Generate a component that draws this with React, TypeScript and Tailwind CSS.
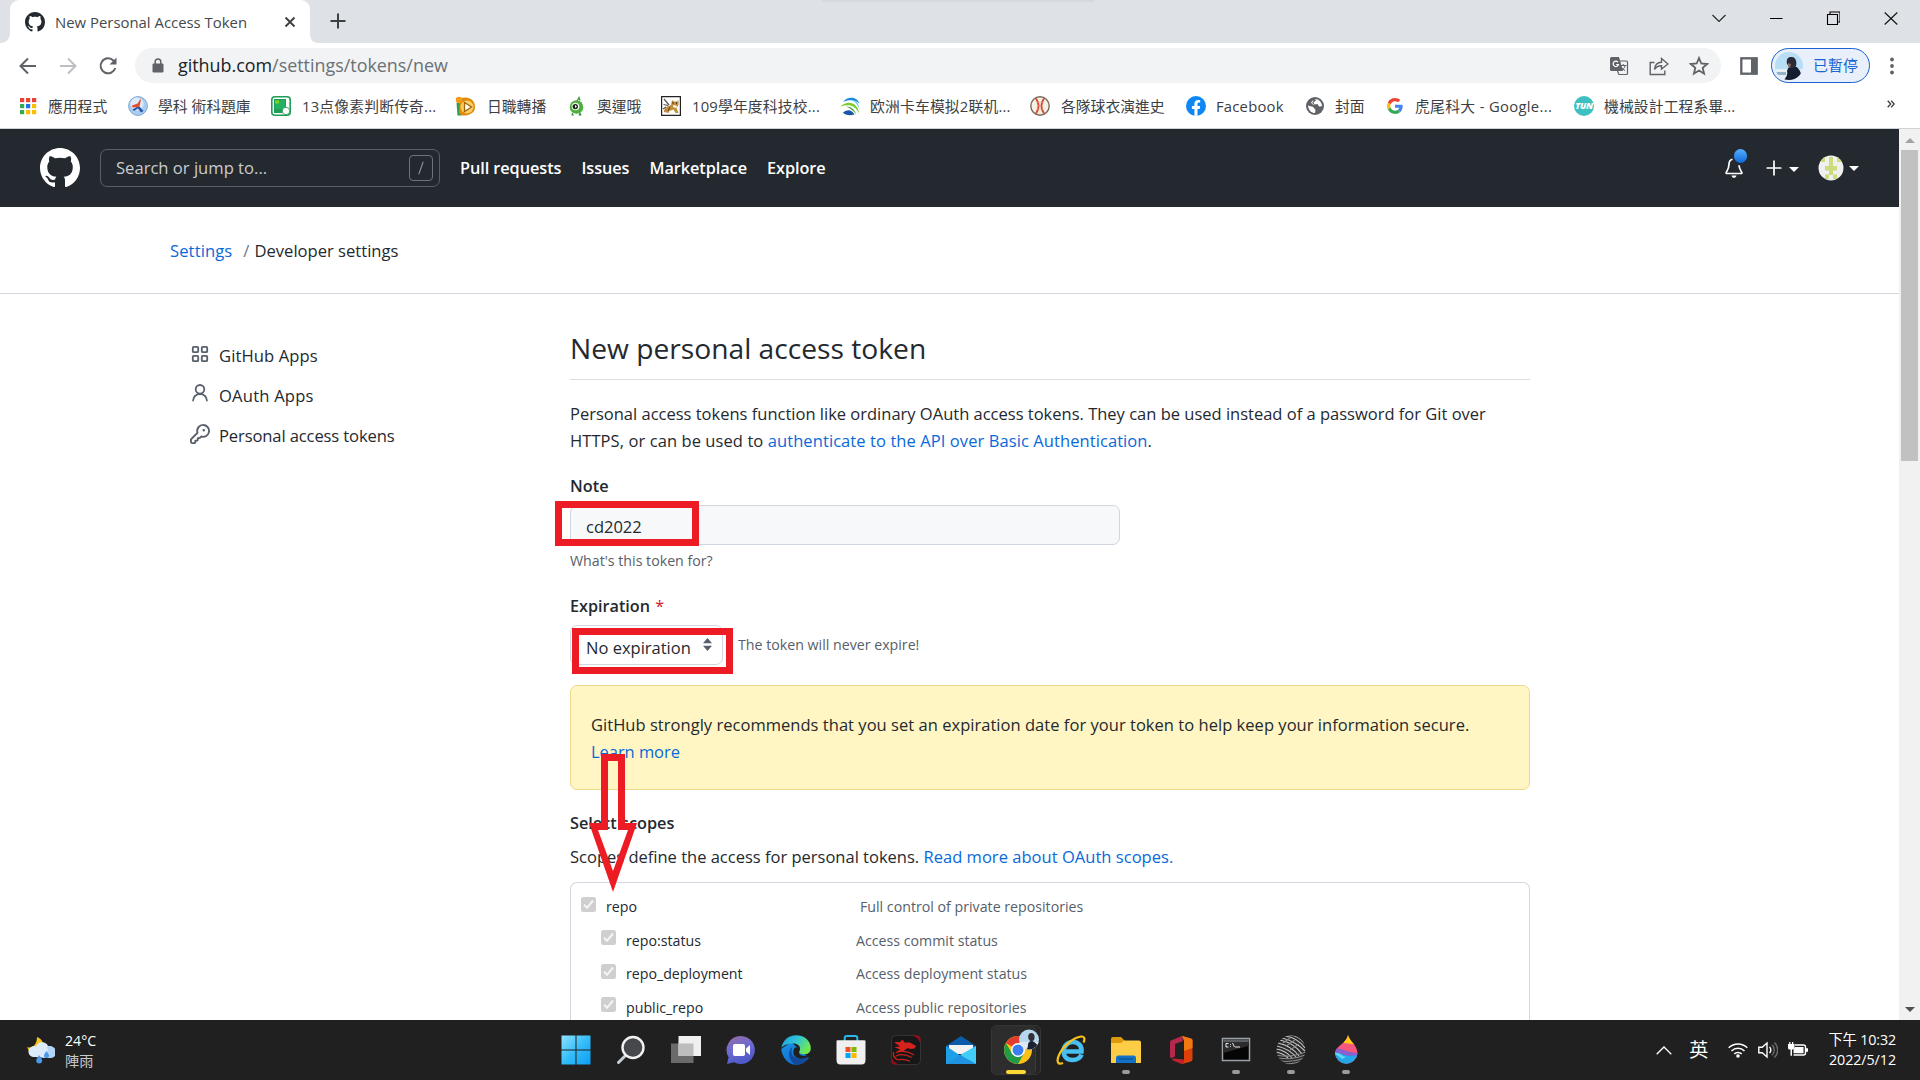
import type { ReactNode } from 'react';

const MARK =
  'M8 0C3.58 0 0 3.58 0 8c0 3.54 2.29 6.53 5.47 7.59.4.07.55-.17.55-.38 0-.19-.01-.82-.01-1.49-2.01.37-2.53-.49-2.69-.94-.09-.23-.48-.94-.82-1.13-.28-.15-.68-.52-.01-.53.63-.01 1.08.58 1.23.82.72 1.21 1.87.87 2.33.66.07-.52.28-.87.51-1.07-1.78-.2-3.64-.89-3.64-3.95 0-.87.31-1.59.82-2.15-.08-.2-.36-1.02.08-2.12 0 0 .67-.21 2.2.82.64-.18 1.32-.27 2-.27.68 0 1.36.09 2 .27 1.53-1.04 2.2-.82 2.2-.82.44 1.1.16 1.92.08 2.12.51.56.82 1.27.82 2.15 0 3.07-1.87 3.75-3.65 3.95.29.25.54.73.54 1.48 0 1.07-.01 1.93-.01 2.2 0 .21.15.46.55.38A8.013 8.013 0 0016 8c0-4.42-3.58-8-8-8z';

function GithubMark({ className }: { className: string }) {
  return (
    <svg viewBox="0 0 16 16" className={className} fill="currentColor">
      <path d={MARK} />
    </svg>
  );
}

/* ---------- Browser chrome ---------- */

function TabStrip() {
  return (
    <div className="relative flex h-[43px] shrink-0 bg-[#dee1e6]">
      <div className="absolute left-[822px] top-0 h-[2px] w-[273px] rounded-b bg-[#d5d8dd]" />
      <div className="flex w-[10px] items-end bg-white">
        <div className="h-full w-[10px] rounded-br-[9px] bg-[#dee1e6]" />
      </div>
      <div className="h-full bg-[#dee1e6]">
        <div className="flex h-full w-[300px] items-center rounded-t-[9px] bg-white pl-[15px] pr-[13px]">
          <GithubMark className="size-5 shrink-0 text-[#24292f]" />
          <span className="ml-[10px] mt-[2px] w-[220px] shrink-0 whitespace-nowrap text-[14.900px] text-[#45494d]">
            New Personal Access Token
          </span>
          <svg viewBox="0 0 12 12" className="ml-[9px] size-3 shrink-0" stroke="#3c4043" strokeWidth="1.900">
            <path d="M1.500 1.500l9 9M10.500 1.500l-9 9" />
          </svg>
        </div>
      </div>
      <div className="flex w-2 bg-white">
        <div className="h-full w-2 rounded-bl-[9px] bg-[#dee1e6]" />
      </div>
      <svg viewBox="0 0 16 16" className="ml-[12px] mt-[13px] size-4" stroke="#3c4043" strokeWidth="2">
        <path d="M8 .5v15M.5 8h15" />
      </svg>
      <div className="ml-auto flex items-start pt-[10px]">
        <svg viewBox="0 0 14 16" className="mr-[43px] h-4 w-[14px]" fill="none" stroke="#222" strokeWidth="1.100">
          <path d="M.5 5l6.500 6.500L13.500 5" />
        </svg>
        <svg viewBox="0 0 14 16" className="mr-[43px] h-4 w-[14px]" stroke="#000" strokeWidth="1">
          <path d="M1 8.500h12.500" />
        </svg>
        <svg viewBox="0 0 14 16" className="mr-[44px] h-4 w-[14px]" fill="none" stroke="#000" strokeWidth="1.100">
          <path d="M1.500 4.500h10v10h-10zM4 4V2h10v10h-2.500" />
        </svg>
        <svg viewBox="0 0 14 16" className="mr-[22px] h-4 w-[14px]" stroke="#111" strokeWidth="1.100">
          <path d="M.7 2.500l12.600 12M13.300 2.500l-12.600 12" />
        </svg>
      </div>
    </div>
  );
}

function Toolbar() {
  return (
    <div className="flex h-10 shrink-0 items-center bg-white">
      <div className="flex w-[135px] shrink-0 items-center pl-[18px] pt-[5px]">
        <svg viewBox="0 0 20 20" className="size-5" fill="none" stroke="#5f6368" strokeWidth="2">
          <path d="M18 10H3M10 2.500L2.500 10l7.500 7.500" />
        </svg>
        <svg viewBox="0 0 20 20" className="ml-5 size-5" fill="none" stroke="#bdbfc2" strokeWidth="2">
          <path d="M2 10h15M10 2.500l7.500 7.500-7.500 7.500" />
        </svg>
        <svg viewBox="0 0 20 20" className="ml-5 size-5" fill="none" stroke="#5f6368" strokeWidth="2">
          <path d="M17.300 12a7.500 7.500 0 1 1-1.700-7.300l1.900 1.900" />
          <path d="M18.500 1.500v7h-7z" fill="#5f6368" stroke="none" />
        </svg>
      </div>
      <div className="mt-[5px] flex h-[35px] w-[1586px] items-center rounded-full bg-[#f1f3f4] pl-[17px] pr-[12px]">
        <svg viewBox="0 0 12 15" className="h-[15px] w-3 shrink-0">
          <rect x=".5" y="5.500" width="11" height="9" rx="1.300" fill="#5f6368" />
          <path d="M3.200 6V3.800a2.800 2.800 0 0 1 5.600 0V6" fill="none" stroke="#5f6368" strokeWidth="1.500" />
        </svg>
        <span className="ml-[14px] whitespace-nowrap text-[17.900px] text-[#202124]">
          github.com<span className="text-[#6b7075]">/settings/tokens/new</span>
        </span>
        <svg viewBox="0 0 20 20" className="ml-auto size-5">
          <path d="M2 1h8l4 14H2.500A1.500 1.500 0 0 1 1 13.500v-11A1.500 1.500 0 0 1 2.500 1z" fill="#5f6368" />
          <path d="M11 5h6.500c.8 0 1 .4 1 1v11.500c0 .6-.4 1-1 1H10l-1.500-3.500" fill="none" stroke="#5f6368" strokeWidth="1.200" />
          <path d="M9 6.200A2.700 2.700 0 1 0 9.500 8.500H7.200" fill="none" stroke="#fff" strokeWidth="1.200" />
          <path d="M11 9.500h6.500M14.200 8v1.500M16.200 9.500c-.4 2.200-2 3.700-3.700 5M12.500 11.200c.6 1.200 2 2.600 3.700 3.500" fill="none" stroke="#5f6368" strokeWidth="1" />
        </svg>
        <svg viewBox="0 0 20 20" className="ml-5 size-5" fill="none" stroke="#5f6368" strokeWidth="1.400">
          <path d="M5.500 6.500H1.200v12h14.600v-4" />
          <path d="M5.500 13.500c.4-4.500 2.600-7 7-7.200V2.500L19 8l-6.500 5V9.700c-3.300 0-5.500 1.300-7 3.800z" />
        </svg>
        <svg viewBox="0 0 20 20" className="ml-5 size-5" fill="none" stroke="#5f6368" strokeWidth="1.800">
          <path d="M10 2l2.300 5.500 5.900.5-4.500 3.900 1.400 5.800L10 14.600l-5.100 3.100 1.400-5.800L1.800 8l5.900-.5z" />
        </svg>
      </div>
      <svg viewBox="0 0 18 18" className="ml-[19px] mt-[5px] size-[18px]">
        <rect x="1.300" y="1.300" width="15.400" height="15.400" fill="#fff" stroke="#5f6368" strokeWidth="2.300" />
        <path d="M11 1h6v16h-6z" fill="#5f6368" />
      </svg>
      <div className="ml-[13px] mt-[5px] flex h-[35px] w-[99px] items-center rounded-full border-[1.500px] border-[#1a63d0] bg-[#e9f0fb] pl-[3px]">
        <svg viewBox="0 0 28 28" className="size-7">
          <defs>
            <clipPath id="user"><circle cx="14" cy="14" r="14" /></clipPath>
          </defs>
          <g clipPath="url(#user)">
            <path d="M0 0h28v28H0z" fill="#b8def6" />
            <path d="M0 17h28v11H0z" fill="#e6eef4" />
            <path d="M0 20h11v3H0z" fill="#8fb4cc" />
            <path d="M9 28c2-3 4-5 3-9 1-4 4-6 7-5 4 1 6 4 7 8l-3 6z" fill="#151d31" />
            <path d="M12 12c-1-5 1-7.500 5-7 4 .5 5 5 4 9l-4 3z" fill="#2b2a35" />
            <path d="M13 11l3 1-1 4-2-1z" fill="#8c6d66" />
          </g>
        </svg>
        <span className="ml-[10px] whitespace-nowrap text-[15px] text-[#1967d2]">已暫停</span>
      </div>
      <svg viewBox="0 0 4 18" className="ml-[20px] mt-[5px] h-[18px] w-1" fill="#5f6368">
        <circle cx="2" cy="2.500" r="1.900" />
        <circle cx="2" cy="9" r="1.900" />
        <circle cx="2" cy="15.500" r="1.900" />
      </svg>
    </div>
  );
}

const APP_COLOURS = ['#ea4335', '#ea4335', '#ea4335', '#34a853', '#1a73e8', '#fbbc04', '#34a853', '#fbbc04', '#fbbc04'];

const bookmarkIcons: Record<string, ReactNode> = {
  apps: (
    <svg viewBox="0 0 18 18" className="size-[18px]">
      {APP_COLOURS.map((c, i) => (
        <rect key={i} x={1 + (i % 3) * 6} y={1 + Math.floor(i / 3) * 6} width="4.200" height="4.200" fill={c} />
      ))}
    </svg>
  ),
  quiz: (
    <svg viewBox="0 0 20 20" className="size-5">
      <circle cx="10" cy="10" r="9.400" fill="#a9cdf0" stroke="#7fa6d6" />
      <circle cx="9" cy="8" r="6.500" fill="#dcecfb" />
      <path d="M12 3l-1 7 4.500 5-2.500 1.500-3-4-4 2.500-1.500-1.500 5-3z" fill="#2b55a5" />
      <path d="M13 2.500l-3.500 5-5.500 2 .5 2 6-.5 1.500-2z" fill="#e8502d" />
    </svg>
  ),
  green: (
    <svg viewBox="0 0 20 20" className="size-5">
      <rect x=".8" y=".8" width="18.400" height="18.400" rx="3" fill="#fff" stroke="#1f9d57" strokeWidth="1.600" />
      <path d="M3 3h12v14H3z" fill="#1f9f55" />
      <path d="M4 4h10v9H4z" fill="#24b060" />
      <path d="M4 4.500h4v3H4z" fill="#7dd321" />
      <circle cx="15" cy="15" r="3.700" fill="#fff" stroke="#3fa86b" />
    </svg>
  ),
  play: (
    <svg viewBox="0 0 20 20" className="size-5">
      <path d="M1.500 7h5v12.500h-4z" fill="#2e9e49" />
      <path d="M5 2.500c8-3 15 1 15 8.500 0 6-6 9-13 8.500L4 17z" fill="#e08a0c" />
      <circle cx="4" cy="4" r="3.200" fill="#f39a1c" />
      <circle cx="12" cy="11" r="6.500" fill="#f8cf63" />
      <path d="M9.500 6.500v9l7-4.500z" fill="#fff" stroke="#a5650b" strokeWidth="1.300" />
    </svg>
  ),
  alien: (
    <svg viewBox="0 0 20 20" className="size-5">
      <path d="M9.500 6L12 1.500l1 3" fill="none" stroke="#3e9a3c" strokeWidth="1.300" />
      <circle cx="9.500" cy="11" r="6.800" fill="#4fae3c" />
      <path d="M5 16l-.5 3.500h2.500zM13 15.500l1.500 4h-3z" fill="#2f8f37" />
      <circle cx="8.500" cy="10.500" r="3.800" fill="#f4fbf1" />
      <circle cx="8.300" cy="10.600" r="2.700" fill="#1b2918" />
      <path d="M8 9v3l2-1.500z" fill="#fff" />
    </svg>
  ),
  cat: (
    <svg viewBox="0 0 20 20" className="size-5">
      <path d="M.6.600h18.800v18.800H.6z" fill="#fff" stroke="#222" strokeWidth="1.200" />
      <path d="M3 16c-.5-3 3-6 7-7l1-5 2 1.500h3L17.500 4V9l-2 3 2 5h-3l-2-3.500-4 1.500-1 2z" fill="#c08f3c" />
      <path d="M3 3l5 6M2.500 8.500l4.500 1M2 13l3-2" stroke="#555" strokeWidth="1.200" />
      <path d="M12.500 9l3.500 1-1 2-3-1z" fill="#fff" />
      <path d="M9 11l-2 4M12 6v2M15.500 6v2" stroke="#4a3313" strokeWidth=".9" />
    </svg>
  ),
  truck: (
    <svg viewBox="0 0 20 20" className="size-5">
      <path d="M3 6C7 0 17 0 19.500 7.500 16 4 9 3 3 6z" fill="#1a8bdc" />
      <path d="M12 4c5 1 7.500 5 7.500 10C18.500 9 16 6 12 4z" fill="#36bdf0" />
      <path d="M.5 10.500C8 3.500 18 7 19 17.500 15 9 9 8 .5 10.500z" fill="#7dcb2a" />
      <path d="M6 10.500c5 0 9 3 10 8C13 14 10 12 6 10.500z" fill="#3f9d3a" />
      <path d="M3 16.500c5-4 9-2.500 11.500 2-5 1.500-9.500.5-11.500-2z" fill="#1b55a6" />
    </svg>
  ),
  ball: (
    <svg viewBox="0 0 20 20" className="size-5">
      <circle cx="10" cy="10" r="9.200" fill="#f3efe4" stroke="#7d6a58" strokeWidth="1.400" />
      <path d="M6 2.500c3.500 5 3.500 10 0 15M14 2.500c-3.500 5-3.500 10 0 15" fill="none" stroke="#d5462f" strokeWidth="1.800" />
      <path d="M6.500 6.500h3M7 10h3M6.500 13.500h3M13.500 6.500h-3M13.500 13.500h-3" stroke="#e58f7d" strokeWidth=".8" />
    </svg>
  ),
  facebook: (
    <svg viewBox="0 0 20 20" className="size-5">
      <circle cx="10" cy="10" r="10" fill="#0c87f5" />
      <path d="M8.400 19.900v-7H5.900V10h2.500V7.800c0-2.600 1.500-3.900 3.700-3.900 1 0 2.100.2 2.100.2v2.400h-1.200c-1.200 0-1.500.7-1.500 1.500v2h2.600l-.4 2.900h-2.200v7z" fill="#fff" />
    </svg>
  ),
  globe: (
    <svg viewBox="0 0 18 18" className="size-[18px]">
      <circle cx="9" cy="9" r="9" fill="#5f6368" />
      <path d="M2 8.500c2 1.200 5 .5 5.500 2 .4 1.500 2 1 2 2.500L9 16c-3.500 0-6.500-2.500-7-7.500z" fill="#fff" />
      <path d="M9 2l1 1.500-2.500 1.800 1 2.200 3-.5 1.500 2.500 3-.3C16 5.500 13 2 9 2z" fill="#fff" />
      <path d="M7 3.500L5.500 6l2 1.500" fill="none" stroke="#fff" />
    </svg>
  ),
  google: (
    <svg viewBox="0 0 48 48" className="size-4">
      <path fill="#EA4335" d="M24 9.500c3.540 0 6.710 1.220 9.210 3.600l6.850-6.850C35.900 2.380 30.470 0 24 0 14.620 0 6.510 5.380 2.560 13.220l7.980 6.190C12.430 13.720 17.740 9.500 24 9.500z" />
      <path fill="#4285F4" d="M46.980 24.550c0-1.570-.15-3.090-.38-4.550H24v9.020h12.940c-.58 2.960-2.260 5.480-4.780 7.180l7.730 6c4.510-4.180 7.090-10.360 7.090-17.650z" />
      <path fill="#FBBC05" d="M10.530 28.590c-.48-1.450-.76-2.990-.76-4.590s.27-3.140.76-4.590l-7.980-6.190C.92 16.460 0 20.120 0 24c0 3.880.92 7.540 2.560 10.780l7.970-6.190z" />
      <path fill="#34A853" d="M24 48c6.480 0 11.930-2.130 15.890-5.810l-7.730-6c-2.150 1.450-4.920 2.300-8.160 2.300-6.260 0-11.570-4.220-13.470-9.910l-7.980 6.190C6.510 42.620 14.620 48 24 48z" />
    </svg>
  ),
  tun: (
    <span className="flex size-5 items-center justify-center rounded-full bg-[#3fc0c0] text-[9px] font-extrabold italic tracking-tight text-white">
      TUN
    </span>
  ),
};

const bookmarks = [
  { icon: 'apps', label: '應用程式', box: 'w-[109px]', cell: 'w-[18px]', gap: 'ml-[11px]' },
  { icon: 'quiz', label: '學科 術科題庫', box: 'w-[143px]', cell: 'w-5', gap: 'ml-[10px]' },
  { icon: 'green', label: '13点像素判断传奇...', box: 'w-[184px]', cell: 'w-5', gap: 'ml-[11px] tracking-[0.012em]' },
  { icon: 'play', label: '日職轉播', box: 'w-[112px]', cell: 'w-5', gap: 'ml-[12px]' },
  { icon: 'alien', label: '奧運哦', box: 'w-[94px]', cell: 'w-5', gap: 'ml-[10px]' },
  { icon: 'cat', label: '109學年度科技校...', box: 'w-[179px]', cell: 'w-5', gap: 'ml-[11px] tracking-[0.012em]' },
  { icon: 'truck', label: '欧洲卡车模拟2联机...', box: 'w-[190px]', cell: 'w-5', gap: 'ml-[10px] tracking-[0.012em]' },
  { icon: 'ball', label: '各隊球衣演進史', box: 'w-[156px]', cell: 'w-5', gap: 'ml-[11px]' },
  { icon: 'facebook', label: 'Facebook', box: 'w-[120px]', cell: 'w-5', gap: 'ml-[10px] tracking-[0.015em]' },
  { icon: 'globe', label: '封面', box: 'w-[81px]', cell: 'w-[18px]', gap: 'ml-[11px]' },
  { icon: 'google', label: '虎尾科大 - Google...', box: 'w-[187px]', cell: 'w-4', gap: 'ml-[12px] tracking-[0.022em]' },
  { icon: 'tun', label: '機械設計工程系畢...', box: 'w-[300px]', cell: 'w-5', gap: 'ml-[10px] tracking-[0.008em]' },
];

function BookmarksBar() {
  return (
    <div className="flex h-[46px] shrink-0 items-center border-b border-[#cfd2d6] bg-white pl-[19px] pr-[25px] text-[#3c4043]">
      {bookmarks.map((b) => (
        <div key={b.icon} className={`flex shrink-0 items-center ${b.box}`}>
          <span className={`flex shrink-0 justify-center ${b.cell}`}>{bookmarkIcons[b.icon]}</span>
          <span className={`mt-px whitespace-nowrap text-[14.800px] ${b.gap}`}>{b.label}</span>
        </div>
      ))}
      <svg viewBox="0 0 8 8" className="-mt-1 ml-auto size-2" fill="none" stroke="#3c4043" strokeWidth="1.300">
        <path d="M.7.700L3.700 4l-3 3.300M4.200.700L7.200 4l-3 3.300" />
      </svg>
    </div>
  );
}

/* ---------- GitHub page ---------- */

function Caret() {
  return <span className="h-0 w-0 border-x-[5px] border-t-[5px] border-x-transparent border-t-white" />;
}

function SiteHeader() {
  return (
    <div className="flex h-[78px] shrink-0 items-center bg-[#24292f] pl-10 pr-10 text-white">
      <GithubMark className="size-10 shrink-0" />
      <div className="ml-5 flex h-[38px] w-[340px] items-center justify-between rounded-[7px] border border-[#57606a] pl-[15px] pr-[6px]">
        <span className="mt-px text-[16.600px] text-[#c9cccf]">Search or jump to...</span>
        <span className="flex h-[26px] w-6 items-center justify-center rounded border border-[#6b737c]">
          <svg viewBox="0 0 6 14" className="h-[14px] w-[6px]" stroke="#8a9199" strokeWidth="1.100">
            <path d="M5.200.800L.8 13.200" />
          </svg>
        </span>
      </div>
      <nav className="ml-5 mt-px flex gap-5 text-[16.300px] font-semibold tracking-[-0.004em]">
        <span>Pull requests</span>
        <span>Issues</span>
        <span>Marketplace</span>
        <span>Explore</span>
      </nav>
      <div className="ml-auto flex items-center">
        <div className="relative">
          <svg viewBox="0 0 18 20" className="h-5 w-[18px]" fill="none" stroke="#fff" strokeWidth="1.700" strokeLinejoin="round">
            <path d="M7.500 1.300C5.100 1.900 4 3.900 4 6.300c0 3.700-.8 4.800-2.800 8.200-.3.600 0 1 .6 1h14.400c.6 0 .9-.4.600-1C14.800 11.100 14 10 14 7.300" />
            <path d="M6.500 17.500h5c-.3 1.500-1.300 2.300-2.500 2.300s-2.200-.8-2.500-2.300z" fill="#fff" stroke="none" />
          </svg>
          <span className="absolute -top-[9px] left-[9px] h-[14px] w-[13px] rounded-full bg-linear-to-b from-[#54aeff] to-[#0969da]" />
        </div>
        <svg viewBox="0 0 16 16" className="ml-[23px] size-4" stroke="#fff" strokeWidth="1.700" strokeLinecap="round">
          <path d="M8 1.200v13.600M1.200 8h13.600" />
        </svg>
        <span className="ml-[7px] mt-[3px] flex"><Caret /></span>
        <svg viewBox="0 0 26 26" className="ml-[19px] size-[26px]">
          <defs>
            <clipPath id="identicon"><circle cx="13" cy="13" r="12.500" /></clipPath>
          </defs>
          <g clipPath="url(#identicon)">
            <path d="M0 0h26v26H0z" fill="#f0f0f0" />
            <path d="M2 2h5v5H2zM19 2h5v5h-5zM11 2h4v18h-4zM7 11h12v4.500H7zM7 19.500h4V24H7zM15 19.500h4V24h-4z" fill="#cbdc7c" />
          </g>
        </svg>
        <span className="ml-[5px] flex"><Caret /></span>
      </div>
    </div>
  );
}

function SideNav() {
  return (
    <nav className="w-[570px] shrink-0 pl-[190px] pt-[41px] text-[16.600px] text-[#24292f]">
      <div className="flex h-10 items-center gap-[9px]">
        <svg viewBox="0 0 20 20" className="-mt-[2px] size-5" fill="none" stroke="#57606a" strokeWidth="1.800">
          <rect x="2.800" y="2.800" width="5.400" height="5.400" rx="1" />
          <rect x="11.800" y="2.800" width="5.400" height="5.400" rx="1" />
          <rect x="2.800" y="11.800" width="5.400" height="5.400" rx="1" />
          <rect x="11.800" y="11.800" width="5.400" height="5.400" rx="1" />
        </svg>
        <span className="mt-[3px] tracking-[0.006em]">GitHub Apps</span>
      </div>
      <div className="flex h-10 items-center gap-[9px]">
        <svg viewBox="0 0 20 20" className="-mt-[4px] size-5" fill="none" stroke="#57606a" strokeWidth="1.800" strokeLinecap="round">
          <circle cx="10" cy="6.300" r="4.300" />
          <path d="M3.100 17.500c.5-4 3.200-6.300 6.900-6.300s6.400 2.300 6.900 6.300" />
        </svg>
        <span className="mt-[3px] tracking-[0.012em]">OAuth Apps</span>
      </div>
      <div className="flex h-10 items-center gap-[9px]">
        <svg viewBox="0 0 16 16" className="-mt-[3px] size-5" fill="#57606a">
          <path d="M6.500 5.500a4 4 0 112.731 3.795.75.75 0 00-.768.18L7.440 10.500H6.250a.75.75 0 00-.75.75v1.190l-.06.06H4.250a.75.75 0 00-.75.75v1.190l-.06.06H1.750a.25.25 0 01-.25-.25v-1.690l5.024-5.023a.75.75 0 00.181-.768A3.995 3.995 0 016.500 5.500zm4-5.500a5.500 5.500 0 00-5.348 6.788L.22 11.720a.75.75 0 00-.22.53v2C0 15.216.784 16 1.750 16h2a.75.75 0 00.53-.22l.5-.5a.75.75 0 00.22-.53V14h.75a.75.75 0 00.53-.22l.5-.5a.75.75 0 00.22-.53V12h.75a.75.75 0 00.53-.22l.932-.932A5.500 5.500 0 1010.500 0zm.5 6a1 1 0 100-2 1 1 0 000 2z" />
        </svg>
        <span className="mt-[3px] tracking-[-0.008em]">Personal access tokens</span>
      </div>
    </nav>
  );
}

function Check() {
  return (
    <span className="mb-[7px] flex size-[15px] shrink-0 items-center justify-center rounded-[2.500px] bg-[#cfcfcf]">
      <svg viewBox="0 0 11 11" className="size-[11px]" fill="none" stroke="#f5f5f5" strokeWidth="2">
        <path d="M1 5.800l3 3L10 1.500" />
      </svg>
    </span>
  );
}

const childScopes = [
  { name: 'repo:status', info: 'Access commit status' },
  { name: 'repo_deployment', info: 'Access deployment status' },
  { name: 'public_repo', info: 'Access public repositories' },
];

function TokenForm() {
  return (
    <main className="w-[960px] shrink-0 text-[16.500px] leading-[26.500px] text-[#24292f]">
      <h1 className="flex h-[86px] items-center border-b border-[#d8dee4] pt-[23px] text-[28.200px]">
        New personal access token
      </h1>
      <p className="mt-[21px]">
        Personal access tokens function like ordinary OAuth access tokens. They can be used instead of a password for Git over
        <br />
        <span className="tracking-[0.005em]">
          HTTPS, or can be used to{' '}
          <span className="text-[#0969da]">authenticate to the API over Basic Authentication</span>.
        </span>
      </p>
      <div className="mt-[19px] h-[26px] text-[16.300px] font-semibold">Note</div>
      <div className="mt-[6px] flex h-10 w-[550px] items-center rounded-[7px] border border-[#d0d7de] bg-[#f6f8fa] pl-[15px] pt-[5px]">
        cd2022
      </div>
      <div className="mt-1 h-6 text-[14.200px] leading-6 text-[#57606a]">What's this token for?</div>
      <div className="mt-5 h-[26px] text-[16.200px] font-semibold">
        Expiration <span className="ml-[1px] font-normal text-[#cf222e]">*</span>
      </div>
      <div className="mt-[6px] flex items-center">
        <div className="flex h-10 w-[153px] items-center rounded-[7px] border border-[#d0d7de] bg-white pl-[15px] pt-[6px]">
          No expiration
          <svg viewBox="0 0 9 13" className="-mt-[7px] ml-[12px] h-[13px] w-[9px]" fill="#57606a">
            <path d="M4.500 0l4.500 5.300H0zM4.500 13L0 7.700h9z" />
          </svg>
        </div>
        <span className="ml-[15px] text-[14.200px] text-[#57606a]">The token will never expire!</span>
      </div>
      <div className="mt-5 h-[105px] rounded-[7px] border border-[#ecd98a] bg-[#fff6c4] pl-5 pt-[26px]">
        <p className="tracking-[0.002em]">
          GitHub strongly recommends that you set an expiration date for your token to help keep your information secure.
        </p>
        <p className="tracking-[-0.003em] text-[#0969da]">Learn more</p>
      </div>
      <div className="mt-[20px] h-[26px] text-[16.300px] font-semibold">Select scopes</div>
      <p className="mt-[8px]">
        Scopes define the access for personal tokens.{' '}
        <span className="tracking-[0.002em] text-[#0969da]">Read more about OAuth scopes.</span>
      </p>
      <div className="mt-[11.500px] h-[160px] rounded-t-[7px] border border-b-0 border-[#d0d7de] pt-[8px] text-[14.200px]">
        <div className="flex h-[33px] items-center pl-[10px]">
          <Check />
          <span className="ml-[10px] w-[254px] font-medium">repo</span>
          <span className="text-[#57606a]">Full control of private repositories</span>
        </div>
        {childScopes.map((s) => (
          <div key={s.name} className="flex h-[33.800px] items-center pl-[30px]">
            <Check />
            <span className="ml-[10px] w-[230px]">{s.name}</span>
            <span className="text-[#57606a]">{s.info}</span>
          </div>
        ))}
      </div>
    </main>
  );
}

function Scrollbar() {
  return (
    <div className="flex w-[21px] shrink-0 flex-col items-center bg-[#f1f1f1]">
      <span className="mt-[9px] h-0 w-0 border-x-[5px] border-b-[5px] border-x-transparent border-b-[#a3a3a3]" />
      <span className="mt-[7px] h-[311px] w-[17px] bg-[#c1c1c1]" />
      <span className="mb-[8px] mt-auto h-0 w-0 border-x-[5px] border-t-[5px] border-x-transparent border-t-[#505050]" />
    </div>
  );
}

/* ---------- Taskbar ---------- */

const appIcons: Record<string, ReactNode> = {
  start: (
    <svg viewBox="0 0 30 30" className="size-[30px]">
      <defs>
        <linearGradient id="win" x1="0" y1="0" x2="1" y2="1">
          <stop offset="0" stopColor="#8fe4ff" />
          <stop offset=".5" stopColor="#35bdf8" />
          <stop offset="1" stopColor="#0c9cf5" />
        </linearGradient>
      </defs>
      <path d="M.5.500h14v14H.5zM15.500.500h14v14h-14zM.5 15.500h14v14H.5zM15.500 15.500h14v14h-14z" fill="url(#win)" />
    </svg>
  ),
  search: (
    <svg viewBox="0 0 30 30" className="size-[30px]">
      <path d="M10 20l-7.500 7.500" stroke="#c9ced3" strokeWidth="3" strokeLinecap="round" />
      <circle cx="17" cy="12.500" r="10.500" fill="#46484b" stroke="#f2f2f2" strokeWidth="2.400" />
    </svg>
  ),
  tasks: (
    <svg viewBox="0 0 30 30" className="size-[30px]">
      <path d="M0 8.500h22.500V28H0z" fill="#6a6a6a" />
      <path d="M7.500 1H30v20H7.500z" fill="#f0f0f0" />
      <path d="M7.500 8.500h15V21h-15z" fill="#bdbdbd" />
    </svg>
  ),
  chat: (
    <svg viewBox="0 0 30 30" className="size-[30px]">
      <defs>
        <linearGradient id="chat" x1="0" y1="0" x2=".4" y2="1">
          <stop offset="0" stopColor="#9a6b9f" />
          <stop offset=".5" stopColor="#6f6bd0" />
          <stop offset="1" stopColor="#5059c9" />
        </linearGradient>
      </defs>
      <path d="M15 1a14 14 0 1 1-7 26.200L1 29l1.600-6.800A14 14 0 0 1 15 1z" fill="url(#chat)" />
      <rect x="7" y="9" width="12" height="12" rx="1.800" fill="#fff" />
      <path d="M20 13.500l4-3.500v10l-4-3.500z" fill="#fff" />
    </svg>
  ),
  edge: (
    <svg viewBox="0 0 30 30" className="size-[30px]">
      <defs>
        <linearGradient id="edgeTop" x1="0" y1="0" x2="1" y2=".5">
          <stop offset="0" stopColor="#1d9be0" />
          <stop offset=".5" stopColor="#2fc3da" />
          <stop offset="1" stopColor="#6ee852" />
        </linearGradient>
        <linearGradient id="edgeLow" x1="0" y1="0" x2=".6" y2="1">
          <stop offset="0" stopColor="#1a93e6" />
          <stop offset="1" stopColor="#0f6ccb" />
        </linearGradient>
      </defs>
      <path d="M.2 14C1 22 7 29.800 15 29.800c5.500 0 10-2.800 12.800-7L20 16 10 7z" fill="url(#edgeLow)" />
      <path d="M11.500 12c-2.500 5-.5 10 5 11.500 3.500 1 8 .5 11-1.500-2.500 5-7.500 8-12.500 7.800C8 27.500 5.500 16 11.500 12z" fill="#114a9c" />
      <path d="M12.300 17c0-3 1.200-4.800 3.700-4.800 2.800 0 3.800 2.300 2.500 4.500-1 2 .5 4.200 4.500 4.200 2 0 4-.6 5.300-1.300l.2 1.400c-3 2.500-7 3.200-10.300 2.500C14 22.500 12.300 20 12.300 17z" fill="#202020" />
      <path d="M.4 13C1.500 5.500 7.500.200 15 .200c9 0 15 6.300 14.800 13 0 4-3 6-6.300 6-3.500 0-6-1-5-3 1.500-3.200 0-7.200-5.500-7.700C7.500 8.200 2 10 .4 13z" fill="url(#edgeTop)" />
    </svg>
  ),
  store: (
    <svg viewBox="0 0 30 30" className="size-[30px]">
      <path d="M8.700 7V3q0-2 2-2h8.600q2 0 2 2v4" fill="none" stroke="#2bb5ec" strokeWidth="2" />
      <path d="M.5 6q0-.8 1-.8h27q1 0 1 .8v19q0 4.500-4 4.500h-21q-4 0-4-4.500z" fill="#f0f0f0" />
      <path d="M9.500 12h5v5h-5z" fill="#f25022" />
      <path d="M15.500 12h5v5h-5z" fill="#7fba00" />
      <path d="M9.500 18h5v5h-5z" fill="#00a4ef" />
      <path d="M15.500 18h5v5h-5z" fill="#ffb900" />
    </svg>
  ),
  dragon: (
    <svg viewBox="0 0 30 30" className="size-[30px]">
      <rect x=".5" y=".5" width="29" height="29" rx="4" fill="#171717" stroke="#343434" />
      <path d="M21 .5h5q3.500 0 3.500 3.500v5c-1-4-3.500-7-8.500-8.500zM.5 22v4q0 3.500 3.500 3.500h4C4.500 28 2 26 .5 22z" fill="#8e0d17" />
      <path d="M3 7l6 0 2.500-2.500 2 3 5.500 0 6 3.500-1.500 2.500-4.500.5-2-1-4 2.500 2.500 2-5-1-5 .5 3.500-2.500-6-2.500 6-.5z" fill="#d4231f" />
      <path d="M3 17c-1.500 3 0 6 4 8M5 17.500c6-2 13-1 18 2.500M5 21c5-2.500 11-1 16 1.500M7 25c4-1.500 8 0 12 1" fill="none" stroke="#c7201e" strokeWidth="1.300" />
    </svg>
  ),
  mail: (
    <svg viewBox="0 0 30 30" className="size-[30px]">
      <path d="M0 11L15 1l15 10v4H0z" fill="#0a5cab" />
      <path d="M3 10h24v9H3z" fill="#f2f2f2" />
      <path d="M0 11l15 10L30 11v18H0z" fill="#1f9fe8" />
      <path d="M30 11v18L14 20z" fill="#42cdf7" />
      <path d="M30 29H0l14-8.700z" fill="#1f93e0" />
    </svg>
  ),
  chrome: (
    <svg viewBox="0 0 36 36" className="size-9 shrink-0">
      <defs>
        <clipPath id="badge"><circle cx="26" cy="10.500" r="10" /></clipPath>
      </defs>
      <circle cx="15" cy="21" r="14" fill="#fbc116" />
      <path d="M15 21L2.900 14A14 14 0 0 1 27.100 14H15z" fill="#e33b2e" />
      <path d="M2.900 14A14 14 0 0 0 15 35l6-10.500-12 0z" fill="#229a48" />
      <circle cx="15" cy="21" r="7" fill="#fff" />
      <circle cx="15" cy="21" r="5.500" fill="#3a7ff0" />
      <g clipPath="url(#badge)">
        <path d="M16 0h20v21H16z" fill="#b5d8ee" />
        <path d="M16 13h20v8H16z" fill="#dfe8ee" />
        <path d="M23 21c2-2 2-4 2-6 1-3 4-4 6-2 2 1 4 3 4 5l-3 4z" fill="#1a2233" />
        <path d="M25.500 10c-1-4 .5-6 3-6s4 3 2.500 7l-3 2z" fill="#33303a" />
      </g>
    </svg>
  ),
  ie: (
    <svg viewBox="0 0 30 30" className="size-[30px]">
      <path d="M25.500 19.500c-1.300 3.500-4.800 5.500-9 5.500-6 0-9-4-9-8.800s4-9.200 9-9.200c6 0 9.500 4 9 9.500H9" fill="none" stroke="#47bff0" strokeWidth="4.600" />
      <path d="M7 28c-5 2-7-1-4-8C6.500 12 17 2.500 25 1.500c4-.3 4 3 2.500 6" fill="none" stroke="#f8c21b" strokeWidth="2.200" />
    </svg>
  ),
  folder: (
    <svg viewBox="0 0 30 30" className="size-[30px]">
      <path d="M0 4q0-2 2-2h8l4 4-4 6H0z" fill="#dd9a0b" />
      <path d="M0 8h10l3-2.500h15q2 0 2 2V28H0z" fill="#fdcd46" />
      <path d="M5 28v-5q0-2.500 2.500-2.500h15Q25 20.500 25 23v5z" fill="#1272c8" />
      <path d="M8 24h14" stroke="#0c4c8d" strokeWidth="1.200" />
    </svg>
  ),
  office: (
    <svg viewBox="0 0 30 30" className="size-[30px]">
      <path d="M16 1L5 5.500Q4 6 4 7.500v14q0 2 2 1.500l3-1.500V9l8-3z" fill="#b5284d" />
      <path d="M16 1l9 2.500q1.500.5 1.500 2v19q0 1.500-1.500 2L16 29l-1-3 3-1V5.500z" fill="#dd3f08" />
      <path d="M16 1l9 2.500q1.500.5 1.500 2V13L18 16V5.500z" fill="#f07a10" />
      <path d="M7 23.500l11 1V29h-2.500L7 25.500q-1.500-1 0-2z" fill="#c3202f" />
    </svg>
  ),
  cmd: (
    <svg viewBox="0 0 30 30" className="size-[30px]">
      <path d="M1.500 3.500h27v22h-27z" fill="#050505" stroke="#9aa0a6" strokeWidth="1.500" />
      <path d="M2.300 4.300h25.400v3H2.300z" fill="#5b5f63" />
      <path d="M2.300 7h25.400l-.5 4L2.300 18z" fill="#2c2c2c" />
      <path d="M7.500 8.500H5v3.500h2.500M9.500 9v.8M9.500 11v.8M11.500 8l2 4M14 12h5" fill="none" stroke="#e8e8e8" strokeWidth="1" />
    </svg>
  ),
  sphere: (
    <svg viewBox="0 0 30 30" className="size-[30px]">
      <defs>
        <clipPath id="globe"><circle cx="15" cy="15" r="14.500" /></clipPath>
      </defs>
      <g clipPath="url(#globe)">
        <path d="M0 0h30v30H0z" fill="#2a2a2a" />
        <g fill="none" strokeWidth="1.100">
          <path d="M12 0c7 0 13 3 17 9M9 1c8 1 15 5 20 12M6 3c9 2 17 7 23 13M4 5c9 2 17 7 22 14M2 8c9 2 16 6 21 13M1 11c8 2 14 5 19 11M0 14c7 1 12 4 16 9M0 17c5 1 9 3 12 6" stroke="#c9c9c9" />
          <path d="M14 3L7 8M19 5L10 11M23 9l-9 6" stroke="#8b8b8b" />
          <path d="M0 20c6 1 14 3 30-3M1 23c8 1 16 2 28-3M4 26c7 1 14 1 25-3M8 29c5 0 10 0 18-3" stroke="#8b8b8b" />
        </g>
      </g>
    </svg>
  ),
  paint: (
    <svg viewBox="0 0 30 30" className="size-[30px]">
      <defs>
        <clipPath id="drop"><path d="M17 0c2 7 9.500 10 9.500 18.500A11.300 11.300 0 0 1 4 18.500C4 11 16 8 17 0z" /></clipPath>
      </defs>
      <g clipPath="url(#drop)">
        <path d="M0 0h30v30H0z" fill="#f5587b" />
        <path d="M10 0h16v10l-5-1-8-1z" fill="#fccb13" />
        <path d="M3 14c8-2 12 4 24 4v5L3 20z" fill="#8a5fd0" />
        <path d="M3 18c7-2 10 5 24 2v10H3z" fill="#25a5ea" />
        <path d="M3 18c6-1 7 3 12 4l-4 2z" fill="#5edaf5" />
      </g>
    </svg>
  ),
};

const taskbarApps = [
  { id: 'start' },
  { id: 'search' },
  { id: 'tasks' },
  { id: 'chat' },
  { id: 'edge' },
  { id: 'store' },
  { id: 'dragon' },
  { id: 'mail' },
  { id: 'chrome', active: true },
  { id: 'ie' },
  { id: 'folder', open: true },
  { id: 'office' },
  { id: 'cmd', open: true },
  { id: 'sphere', open: true },
  { id: 'paint', open: true },
];

function Taskbar() {
  return (
    <div className="flex h-[60px] shrink-0 bg-[#202020] text-white">
      <div className="flex w-[548px] shrink-0 items-center pl-[27px]">
        <svg viewBox="0 0 28 28" className="size-7">
          <path d="M10 1c6 2 8 8 4 14L3 17 0 11c5 2 10-2 10-10z" fill="#f9c31d" />
          <path d="M8 21a5.500 5.500 0 1 1 1-10.500 6.500 6.500 0 0 1 12-.5 6 6 0 1 1 1 12z" fill="#dcebf9" />
          <path d="M20 11a6 6 0 1 1 2 11H11a8 8 0 0 0 9-11z" fill="#b3d5f5" />
          <path d="M12 19c2 3 3.200 4 3.200 5.500a3 3 0 0 1-6 0C9.200 23 11 21.500 12 19zM19.500 15c1.500 2.500 2.500 3 2.500 4.500a2.500 2.500 0 0 1-5 0c0-1.500 1.500-2.500 2.500-4.500z" fill="#4b97e8" />
        </svg>
        <div className="ml-[10px] flex flex-col pt-px text-[14.200px] leading-5">
          <span>24°C</span>
          <span className="text-[#c9c9c9]">陣雨</span>
        </div>
      </div>
      <div className="flex">
        {taskbarApps.map((a) =>
          a.active ? (
            <div key={a.id} className="flex w-[55px] items-center justify-center">
              <div className="flex h-[50px] w-[50px] rounded-[5px] border border-[#353535] bg-[#262626]">
                <div className="flex w-[44px] shrink-0 flex-col items-end rounded-[5px] border-r border-[#3c3c3c] bg-[#2d2d2d] pt-[3px]">
                  <span className="-mr-[4px] flex">{appIcons[a.id]}</span>
                  <span className="mr-[9px] mt-[5px] h-1 w-5 shrink-0 rounded-full bg-[#fdd835]" />
                </div>
              </div>
            </div>
          ) : (
            <div key={a.id} className="flex w-[55px] flex-col items-center pt-[15px]">
              {appIcons[a.id]}
              {a.open && <span className="mt-[5px] h-1 w-2 rounded-full bg-[#9a9a9a]" />}
            </div>
          ),
        )}
      </div>
      <div className="ml-auto flex shrink-0 items-center pr-6">
        <svg viewBox="0 0 16 9" className="h-[9px] w-4" fill="none" stroke="#fff" strokeWidth="1.300">
          <path d="M.7 8.300L8 1l7.300 7.300" />
        </svg>
        <span className="ml-[17px] text-[19px]">英</span>
        <svg viewBox="0 0 20 16" className="ml-[20px] h-4 w-5" fill="none" stroke="#fff" strokeWidth="1.500">
          <path d="M.7 5.800a13.300 13.300 0 0 1 18.600 0M3.500 9a9.300 9.300 0 0 1 13 0M6.300 11.900a5.300 5.300 0 0 1 7.400 0" />
          <circle cx="10" cy="14" r="1.800" fill="#fff" stroke="none" />
        </svg>
        <svg viewBox="0 0 20 18" className="ml-[10px] h-[18px] w-5" fill="none" strokeWidth="1.400">
          <path d="M.8 6.200h3.400L9 2v14l-4.800-4.200H.8z" stroke="#fff" />
          <path d="M11.500 6a4 4 0 0 1 0 6" stroke="#fff" />
          <path d="M14 3.800a7 7 0 0 1 0 10.400M16.400 1.600a10 10 0 0 1 0 14.800" stroke="#6c6c6c" />
        </svg>
        <svg viewBox="0 0 20 18" className="ml-[10px] h-[18px] w-5">
          <path d="M7 4h8.500q2 0 2 2v6q0 2-2 2H5.500" fill="none" stroke="#fff" strokeWidth="1.400" />
          <path d="M7 6h8.500v6.200H5.500V9z" fill="#fff" />
          <path d="M18 7.300h2v3.500h-2zM0 3h6.500v4q0 1.500-1.500 1.500H1.500Q0 8.500 0 7zM1.200 1h1.300v2H1.200zM4 1h1.300v2H4zM2.500 8h1.500v6.700H2.500z" fill="#fff" />
        </svg>
        <div className="ml-5 flex flex-col items-end whitespace-nowrap text-[14.300px] leading-5">
          <span className="tracking-[-0.01em]">下午 10:32</span>
          <span className="tracking-[-0.005em]">2022/5/12</span>
        </div>
      </div>
    </div>
  );
}

/* ---------- Red markup drawn over the page ---------- */

function Annotations() {
  return (
    <>
      <div className="absolute left-[555px] top-[501px] h-[45px] w-[144px] border-[7px] border-[#ed1c24]" />
      <div className="absolute left-[572px] top-[628px] h-[46px] w-[161px] border-[7px] border-[#ed1c24]" />
      <svg viewBox="0 0 50 140" className="absolute left-[588px] top-[753px] h-[140px] w-[50px]" fill="#ed1c24">
        <path
          fillRule="evenodd"
          d="M13 1h24v69h12L25 139 1 70h12zM20 8v69h-10L25 118 40 77H30V8z"
        />
      </svg>
    </>
  );
}

export default function App() {
  return (
    <div className="relative flex h-[1080px] w-[1920px] flex-col overflow-hidden bg-white font-['Open_Sans','Noto_Sans_CJK_TC',sans-serif] leading-normal">
      <TabStrip />
      <Toolbar />
      <BookmarksBar />
      <div className="flex h-[891px] shrink-0 overflow-hidden">
        <div className="flex w-[1899px] shrink-0 flex-col">
          <SiteHeader />
          <div className="flex h-[87px] shrink-0 items-center border-b border-[#d0d7de] pl-[170px] pt-[2px] text-[16.600px] text-[#24292f]">
            <span className="tracking-[0.006em] text-[#0969da]">Settings</span>
            <span className="ml-[11px] text-[#6e7781]">/</span>
            <span className="ml-[5px]">Developer settings</span>
          </div>
          <div className="flex">
            <SideNav />
            <TokenForm />
          </div>
        </div>
        <Scrollbar />
      </div>
      <Taskbar />
      <Annotations />
    </div>
  );
}
